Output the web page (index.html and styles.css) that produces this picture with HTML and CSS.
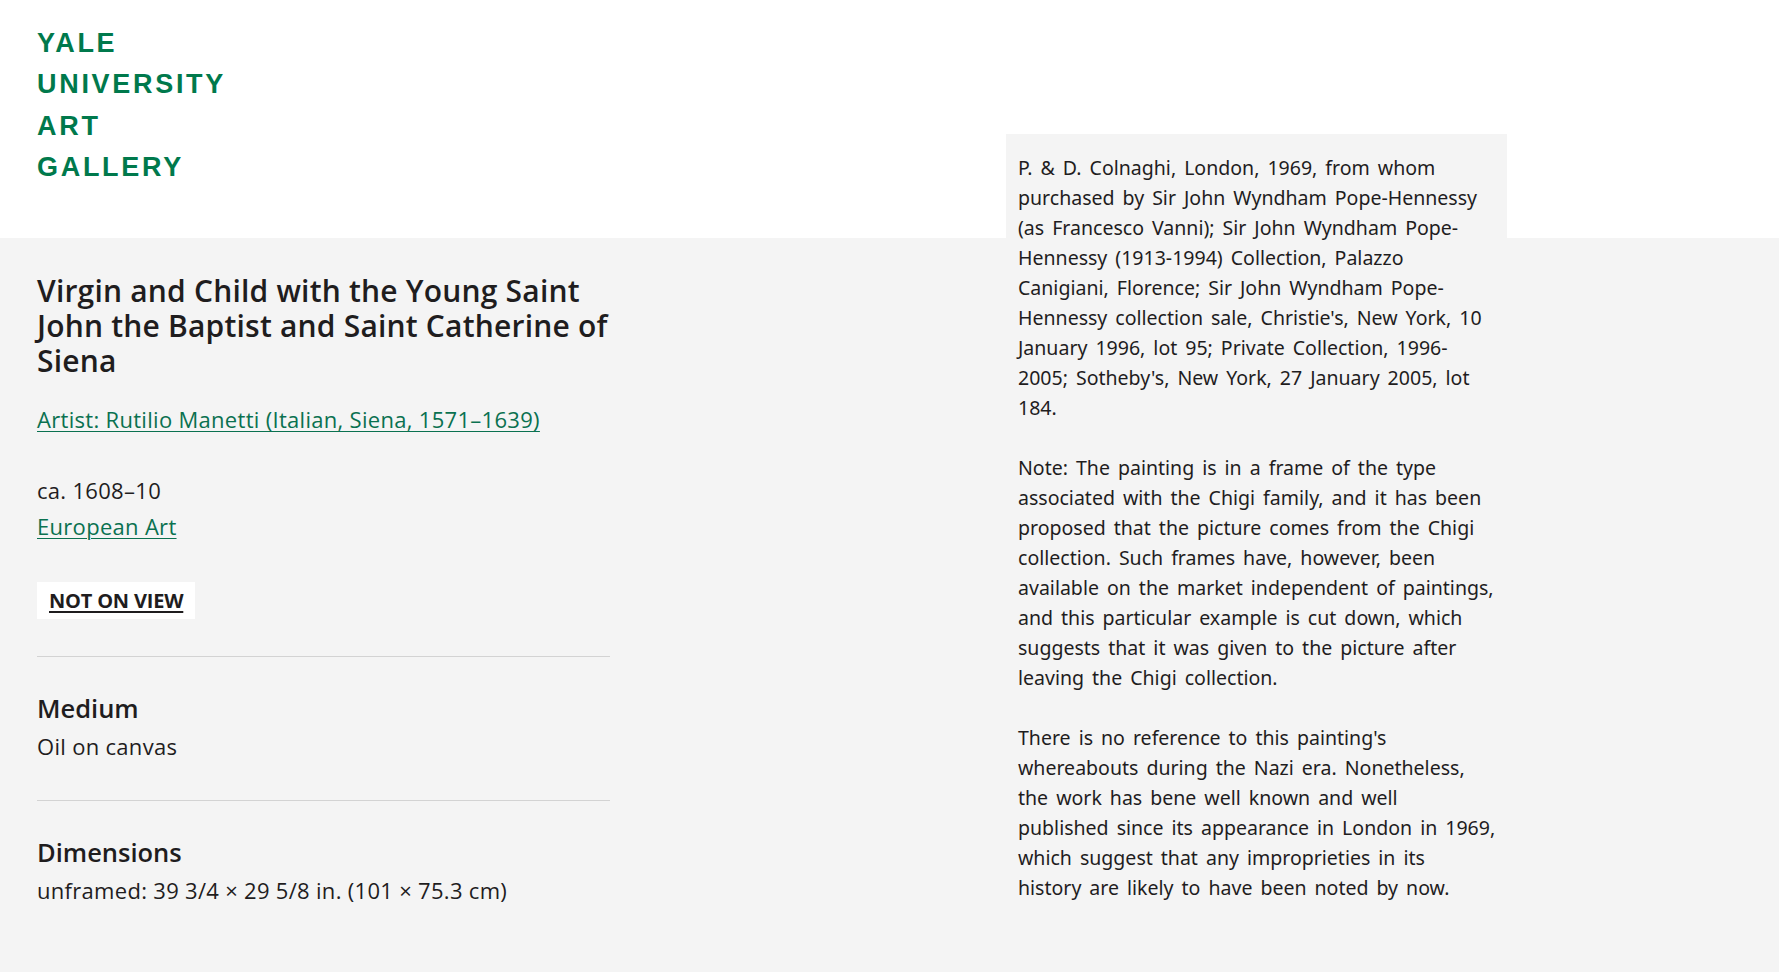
FILE: index.html
```html
<!DOCTYPE html>
<html lang="en">
<head>
<meta charset="utf-8">
<title>Virgin and Child with the Young Saint John the Baptist and Saint Catherine of Siena | Yale University Art Gallery</title>
<link rel="stylesheet" href="styles.css">
</head>
<body>
<header class="site-header">
  <a class="logo" href="#">YALE<br>UNIVERSITY<br>ART<br>GALLERY</a>
</header>
<main class="object">
  <section class="summary">
    <h1 class="title">Virgin and Child with the Young Saint John the Baptist and Saint Catherine of Siena</h1>
    <p class="artist"><a class="link" href="#">Artist: Rutilio Manetti (Italian, Siena, 1571–1639)</a></p>
    <div class="meta">
      <p class="date">ca. 1608–10</p>
      <a class="link" href="#">European Art</a>
    </div>
    <a class="status" href="#">NOT ON VIEW</a>
    <dl class="facts">
      <div class="fact">
        <dt>Medium</dt>
        <dd>Oil on canvas</dd>
      </div>
      <div class="fact">
        <dt>Dimensions</dt>
        <dd>unframed: 39 3/4 × 29 5/8 in. (101 × 75.3 cm)</dd>
      </div>
    </dl>
  </section>
  <aside class="provenance">
    <p>P. &amp; D. Colnaghi, London, 1969, from whom purchased by Sir John Wyndham Pope-Hennessy (as Francesco Vanni); Sir John Wyndham Pope-Hennessy (1913-1994) Collection, Palazzo Canigiani, Florence; Sir John Wyndham Pope-Hennessy collection sale, Christie's, New York, 10 January 1996, lot 95; Private Collection, 1996-2005; Sotheby's, New York, 27 January 2005, lot 184.</p>
    <p>Note: The painting is in a frame of the type associated with the Chigi family, and it has been proposed that the picture comes from the Chigi collection. Such frames have, however, been available on the market independent of paintings, and this particular example is cut down, which suggests that it was given to the picture after leaving the Chigi collection.</p>
    <p>There is no reference to this painting's whereabouts during the Nazi era. Nonetheless, the work has bene well known and well published since its appearance in London in 1969, which suggest that any improprieties in its history are likely to have been noted by now.</p>
  </aside>
</main>
</body>
</html>
```
FILE: styles.css
```css
* { box-sizing: border-box; }

html, body {
  margin: 0;
  padding: 0;
}

body {
  background: #f4f4f4;
  color: #1f1d1e;
  font-family: "Open Sans", "Noto Sans", sans-serif;
  font-size: 20px;
  line-height: 30px;
  min-height: 972px;
}

.site-header {
  background: #ffffff;
  height: 238px;
  padding: 23px 0 0 37px;
}

.logo {
  display: inline-block;
  color: #00794c;
  text-decoration: none;
  font-family: "Liberation Sans", Arial, sans-serif;
  font-weight: 700;
  font-size: 27px;
  line-height: 41.3px;
  letter-spacing: 2.7px;
}

.object {
  display: grid;
  grid-template-columns: 573px 501px;
  column-gap: 396px;
  align-items: start;
  padding: 35px 0 0 37px;
}

.summary {
  font-size: 22px;
  letter-spacing: 0.3px;
}

.title {
  margin: 0;
  font-size: 30px;
  line-height: 35px;
  font-weight: 600;
  letter-spacing: 0.2px;
  color: #1f1d1e;
}

.artist {
  margin: 26px 0 0;
}

.link {
  color: #0a7150;
  text-decoration: underline;
  text-decoration-thickness: 1px;
  text-underline-offset: 3px;
}

.meta {
  margin-top: 38px;
  line-height: 36px;
}

.date {
  margin: 0;
}

.status {
  display: inline-block;
  margin-top: 38px;
  background: #ffffff;
  color: #1f1d1e;
  font-weight: 700;
  font-size: 20px;
  line-height: 37px;
  height: 37px;
  padding: 0 12px;
  letter-spacing: -0.2px;
  text-decoration: underline;
  text-decoration-thickness: 2px;
  text-underline-offset: 3px;
}

.facts {
  margin: 37px 0 0;
}

.fact {
  border-top: 1px solid #d3d3d3;
  padding: 35px 0 39px;
}

.fact dt {
  font-size: 25.5px;
  line-height: 32px;
  font-weight: 600;
  letter-spacing: 0;
}

.fact dd {
  margin: 7px 0 0;
}

.provenance {
  margin-top: -139px;
  background: #f4f4f4;
  padding: 19px 11px 18px 12px;
  font-family: "Noto Sans", "Open Sans", sans-serif;
  font-size: 19.54px;
  letter-spacing: 0;
  word-spacing: 2.93px;
}

.provenance p {
  margin: 0 0 30px;
}
```
